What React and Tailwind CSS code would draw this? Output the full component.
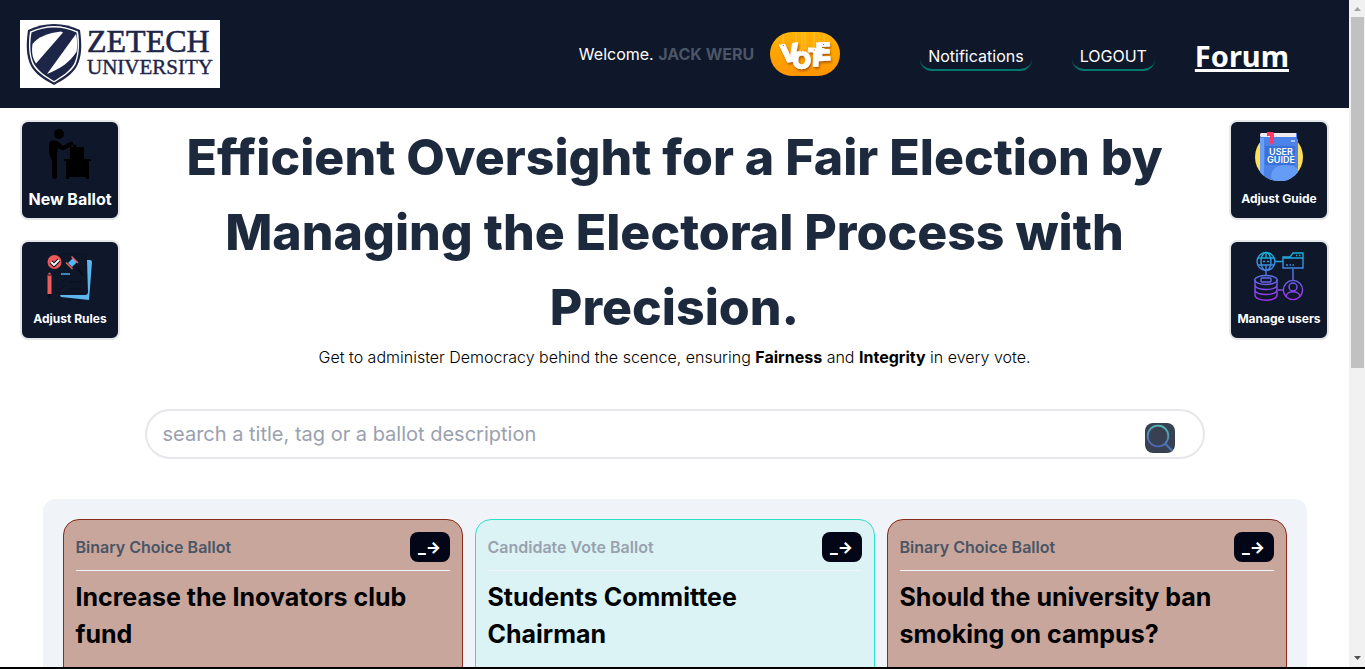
function Logo() {
  return (
    <svg viewBox="0 0 200 68" className="h-[68px] w-[200px]" role="img" aria-label="Zetech University">
      <rect width="200" height="68" fill="#fff" />
      <path d="M34 4 C43 4 52 6 60 10 C62 24 62 36 57 46 C52 55 43 60 34 65 C25 60 16 55 11 46 C6 36 6 24 8 10 C16 6 25 4 34 4Z" fill="#1d2549" />
      <path d="M34 6 C42 6 50 8 58 11.500 C60 25 59 36 55.500 44.500 C50 53.500 42 57.500 34 62.500 C26 57.500 18 53.500 12.500 44.500 C9 36 8 25 10 11.500 C18 8 26 6 34 6Z" fill="#fff" />
      <path d="M34 7.500 C42 7.500 49 9 56.500 12.500 C58.500 25 58 36 54 44 C49 52 42 56 34 61 C26 56 19 52 14 44 C10 36 9.500 25 11.500 12.500 C19 9 26 7.500 34 7.500Z" fill="#1d2549" />
      <path d="M12.500 24 C18 17 28 13 41 11.500 L43 12.500 L16 43.500 C12 38 11.500 31 12.500 24Z" fill="#fff" />
      <path d="M56 14 C57.500 20 57.500 26 56.500 32 C50 42 40 49 27 54 Z" fill="#fff" />
      <path d="M56 33 C55 39 53 44 49 48 C44 53 39 55 34 59 L28 55 C40 52 49 44 56 33Z" fill="#1d2549" />
      <text x="67" y="32" fontFamily="Liberation Serif, serif" fontSize="32" fill="#1d2549" stroke="#1d2549" strokeWidth="0.6">ZETECH</text>
      <text x="67" y="54" fontFamily="Liberation Serif, serif" fontSize="21" fill="#1d2549" stroke="#1d2549" strokeWidth="0.4">UNIVERSITY</text>
    </svg>
  );
}

function VoteBadge() {
  return (
    <svg viewBox="0 0 70 44" className="h-11 w-[70px] rounded-full" role="img" aria-label="Vote">
      <defs>
        <linearGradient id="voteBg" x1="0" y1="0" x2="0" y2="1">
          <stop offset="0" stopColor="#ffb300" />
          <stop offset="1" stopColor="#ff9500" />
        </linearGradient>
        <filter id="voteShadow" x="-20%" y="-20%" width="150%" height="160%">
          <feDropShadow dx="1" dy="2" stdDeviation="1.2" floodColor="#a85500" floodOpacity="0.9" />
        </filter>
      </defs>
      <rect width="70" height="44" fill="url(#voteBg)" />
      <path d="M13 0V13M26 0V11M32 0V18M35 0V18M44 0V15M54 0V11" stroke="#ffd36b" strokeWidth="0.6" />
      <text x="11 22 37 46" y="31 37 34 29" rotate="-7 0 2 -2" fontFamily="Inter, sans-serif" fontWeight="900" fontSize="25" fill="#fff" stroke="#fff" strokeWidth="0.6" filter="url(#voteShadow)">VOTE</text>
      <path d="M13 13.500H14M31 19H32M34.500 19H35.500M44 18H45M53 12.500H54" stroke="#c77a20" />
    </svg>
  );
}

function BallotIcon() {
  return (
    <svg viewBox="0 0 50 50" className="size-[50px]" aria-hidden="true">
      <circle cx="14" cy="5" r="5" />
      <path d="M4 17C4 11 8 11 12 12L18 17L25 13C28 12 29 15 27 17L19 21C17 22 15 20 13 19L12 24V47C12 51 7 51 7 47V32L4 24Z" />
      <path d="M25 18H39V30H25ZM29 15L31 16V18H28ZM19 30H46V32H44V50H41V48H24V50H21V32H19Z" />
    </svg>
  );
}

function RulesIcon() {
  return (
    <svg viewBox="-2 -1 50 50" className="size-[50px]" aria-hidden="true">
      <path d="M12 11V2H39V41H9V27" fill="#0e1728" stroke="#0a1322" />
      <path d="M40 8H43Q45 8 45 10L42 48L14 45L13 43H38Q41 43 41 40Z" fill="#5cb7ef" />
      <path d="M14 22H23" stroke="#4caee9" strokeWidth="1.5" />
      <path d="M13 32L18 27M13 38L18 33M22 30H34M22 37H34" stroke="#080f1c" />
      <circle cx="7.500" cy="10" r="7" fill="#ee5a5a" />
      <path d="M4 10L7 13L12 8" fill="none" stroke="#101827" strokeWidth="4" />
      <path d="M4 10L7 13L12 8" fill="none" stroke="#fff" strokeWidth="1.8" />
      <path d="M21 11L26 6L30 10L25 15Z" fill="#4fb7f5" />
      <path d="M19 10.500L25.500 17M24.500 4.500L31 11" stroke="#ee5a5a" strokeWidth="1.6" />
      <path d="M28 14L36 23" stroke="#080f1c" strokeWidth="2" />
      <path d="M0.500 23Q2.500 18 4.500 23V42L2.500 47L0.500 42Z" fill="#ed5b5b" />
      <path d="M0.500 23H4.500M0.500 42L2.500 47L4.500 42" stroke="#08101f" fill="#08101f" />
    </svg>
  );
}

function GuideIcon() {
  return (
    <svg viewBox="0 -1 50 50" className="size-[50px]" aria-hidden="true">
      <circle cx="25" cy="25" r="24" fill="#ffdf5a" />
      <path d="M6 3Q6 1 8 1H43V7H44V40C34 52 17 53 6 40Z" fill="#4c83e8" />
      <path d="M6 6V40L10 44V6Z" fill="#6b9ff5" />
      <path d="M7 1H42V5H7Q5 3 7 1Z" fill="#efeaf0" />
      <path d="M17 46Q17 34 30 33Q40 33 44 37V40C36 50 25 52 17 46Z" fill="#659cf5" />
      <rect x="11" y="14" width="30" height="19" fill="#3972d6" />
      <path d="M37 9H41" stroke="#c5dcff" strokeWidth="1.5" />
      <path d="M13 0H19Q20 0 20 3V13L18 11L16 13V4H13Z" fill="#ff3865" />
      <text x="27" y="23" fill="#fff" fontFamily="Inter, sans-serif" fontWeight="600" fontSize="9" textAnchor="middle">
        USER<tspan x="27" y="31">GUIDE</tspan>
      </text>
    </svg>
  );
}

function UsersIcon() {
  return (
    <svg viewBox="0 0 50 50" className="size-[50px]" fill="none" stroke="url(#usersStroke)" strokeWidth="1.4" aria-hidden="true">
      <defs>
        <linearGradient id="usersStroke" gradientUnits="userSpaceOnUse" x1="0" y1="0" x2="0" y2="50">
          <stop offset="0" stopColor="#12b5d4" />
          <stop offset="0.5" stopColor="#5871e5" />
          <stop offset="1" stopColor="#a52df0" />
        </linearGradient>
      </defs>
      <circle cx="12" cy="10.500" r="9" />
      <ellipse cx="12" cy="10.500" rx="5" ry="9" />
      <path d="M4 7H20M4 14H20M12 1V7M12 14V25M9 10.500H11M13 10.500H15M21 10.500H29M39 18V29M24 39H29" />
      <path d="M29 17V6H36L39 2H49V17ZM29 7H49M32 14H34M35.500 14H37M38.500 14H40M42 4.500H43.500M45 4.500H46.500" />
      <ellipse cx="12" cy="29" rx="11.300" ry="4.500" />
      <path d="M1 29V44C1 51 23 51 23 44V29M1 34C1 40 23 40 23 34M1 39C1 45 23 45 23 39" />
      <rect x="7" y="27" width="10" height="4" rx="1" />
      <circle cx="39" cy="39" r="9.600" />
      <circle cx="39" cy="36" r="4" />
      <path d="M32 46C32 39 46 39 46 46" />
    </svg>
  );
}

function SearchIcon() {
  return (
    <svg viewBox="0 0 30 30" className="size-[30px]" aria-hidden="true">
      <defs>
        <linearGradient id="searchStroke" gradientUnits="userSpaceOnUse" x1="16" y1="3" x2="10" y2="24">
          <stop offset="0" stopColor="#55b9b6" />
          <stop offset="1" stopColor="#5060b8" />
        </linearGradient>
      </defs>
      <circle cx="13" cy="13" r="10.300" fill="none" stroke="url(#searchStroke)" strokeWidth="1.800" />
      <path d="M20 20.500L27.500 28" stroke="#4978bd" strokeWidth="2" />
    </svg>
  );
}

function Tile({ label, icon, large }) {
  return (
    <button className={`flex size-[100px] flex-col items-center rounded-lg border-2 border-gray-200 bg-slate-900 text-white ${large ? "gap-2 pt-[7px]" : "gap-1.5 pt-[9px]"}`}>
      {icon}
      <span className={`leading-6 font-bold whitespace-nowrap ${large ? "text-base" : "text-xs"}`}>{label}</span>
    </button>
  );
}

const ballots = [
  { kind: "Binary Choice Ballot", title: "Increase the Inovators club fund", box: "border-[#8b2c1b] bg-[#c8a69c]", tone: "text-gray-600" },
  { kind: "Candidate Vote Ballot", title: "Students Committee Chairman", box: "border-[#2ee0cb] bg-[#dbf3f4]", tone: "text-gray-400" },
  { kind: "Binary Choice Ballot", title: "Should the university ban smoking on campus?", box: "border-[#8b2c1b] bg-[#c8a69c]", tone: "text-gray-600" },
];

function BallotCard({ kind, title, box, tone }) {
  return (
    <article className={`min-h-[200px] rounded-2xl border p-3 ${box}`}>
      <div className="flex h-[39px] items-start justify-between border-b border-slate-100">
        <span className={`text-base leading-[30px] font-semibold ${tone}`}>{kind}</span>
        <button aria-label={`Open ${title}`} className="h-[30px] w-10 rounded-lg bg-[#020617] text-base font-extrabold text-white">_→</button>
      </div>
      <h2 className="mt-2 pr-3 text-[25px] leading-[37px] font-bold text-black">{title}</h2>
    </article>
  );
}

function ScrollRail() {
  return (
    <div className="flex w-4 shrink-0 flex-col items-center justify-between bg-[#f1f1f1]" aria-hidden="true">
      <div className="flex w-full flex-col items-center">
        <svg viewBox="0 0 16 17" className="h-[17px] w-4"><path d="M5 11L8.500 7L12 11Z" fill="#a3a3a3" /></svg>
        <div className="h-[351px] w-[13px] bg-[#c1c1c1]" />
      </div>
      <svg viewBox="0 0 16 17" className="h-[17px] w-4"><path d="M5 6L8.500 10L12 6Z" fill="#505050" /></svg>
    </div>
  );
}

export default function App() {
  return (
    <div className="flex h-screen flex-col overflow-hidden bg-white font-['Inter',sans-serif]">
      <div className="flex min-h-0 flex-1">
        <div className="min-w-0 flex-1 overflow-hidden">
          <header className="flex items-center bg-slate-900 py-5 pr-[60px] pl-5 text-white">
            <Logo />
            <div className="ml-auto flex items-center gap-4">
              <p className="text-base">Welcome. <span className="font-bold text-gray-600">JACK WERU</span></p>
              <VoteBadge />
            </div>
            <nav className="ml-20 flex items-center gap-10 pt-[3px]">
              <a href="#notifications" className="rounded-xl border-b-2 border-teal-700 px-2 pt-1 pb-px">Notifications</a>
              <a href="#logout" className="rounded-xl border-b-2 border-teal-700 px-2 pt-1 pb-px">LOGOUT</a>
              <a href="#forum" className="font-['Noto_Sans',sans-serif] text-[29px] leading-9 font-bold underline decoration-3">Forum</a>
            </nav>
          </header>
          <main>
            <div className="flex items-start justify-between px-5 pt-3">
              <div className="flex flex-col gap-5">
                <Tile label="New Ballot" icon={<BallotIcon />} large />
                <Tile label="Adjust Rules" icon={<RulesIcon />} />
              </div>
              <section className="flex-1 text-center">
                <h1 className="mx-auto max-w-[1060px] text-[50px] leading-[75px] font-extrabold text-slate-800">Efficient Oversight for a Fair Election by Managing the Electoral Process with Precision.</h1>
                <p className="text-base leading-6 font-light text-black">Get to administer Democracy behind the scence, ensuring <b className="font-bold">Fairness</b> and <b className="font-bold">Integrity</b> in every vote.</p>
              </section>
              <div className="flex flex-col gap-5">
                <Tile label="Adjust Guide" icon={<GuideIcon />} />
                <Tile label="Manage users" icon={<UsersIcon />} />
              </div>
            </div>
            <form className="mx-auto mt-10 flex h-[50px] w-[1060px] max-w-full items-center rounded-full border-2 border-gray-200 pr-7 pl-4" onSubmit={(e) => e.preventDefault()}>
              <input aria-label="Search ballots" placeholder="search a title, tag or a ballot description" className="min-w-0 flex-1 text-xl outline-none placeholder:text-gray-400" />
              <button aria-label="Search" className="mt-2 rounded-lg bg-[#374151]"><SearchIcon /></button>
            </form>
            <section className="mx-auto mt-10 grid w-[1264px] max-w-full grid-cols-3 gap-3 rounded-xl bg-[#f0f4f9] p-5">
              {ballots.map((b) => <BallotCard key={b.title} {...b} />)}
            </section>
          </main>
        </div>
        <ScrollRail />
      </div>
      <div className="h-0.5 shrink-0 bg-black" />
    </div>
  );
}
